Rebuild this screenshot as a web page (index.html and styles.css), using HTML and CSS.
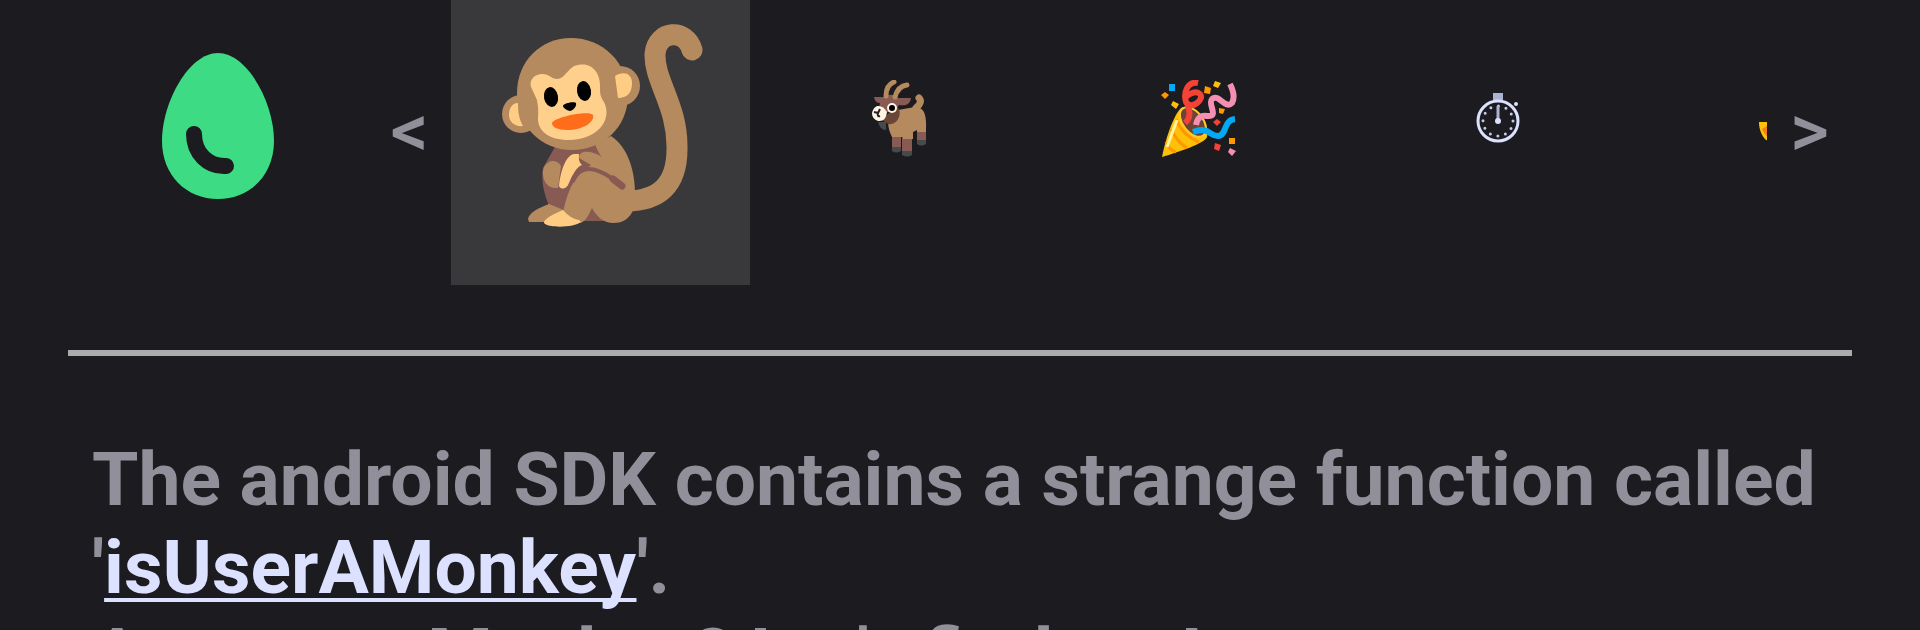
FILE: index.html
```html
<!DOCTYPE html>
<html lang="en">
<head>
    <meta charset="UTF-8">
    <meta name="viewport" content="width=device-width, initial-scale=1.0">
    <title>Easter Eggs</title>
    <link rel="stylesheet" href="styles.css">
</head>
<body>
    <header class="bar">
        <a class="home" href="#" aria-label="Home">
            <svg class="egg" viewBox="0 0 114 147">
                <path fill="#3ddc84" d="M57 0C86 0 113 49 113 88C113 122 89 146 57 146S1 122 1 88C1 49 28 0 57 0Z"/>
                <path fill="none" stroke="#1c1b1f" stroke-width="16" stroke-linecap="round" d="M33 81C33 100 47 114 65 113"/>
            </svg>
        </a>
        <button class="arrow" type="button" aria-label="Previous">&lt;</button>
        <nav class="eggs">
            <button class="item selected" type="button" aria-label="Monkey">
                <svg class="monkey" viewBox="-2 -1 204 206">
                    <path fill="none" stroke="#b58a5e" stroke-width="21" stroke-linecap="round" d="M191 27C185 5 156 7 154 31C153 58 177 83 176 126C176 162 158 178 125 178"/>
                    <path fill="#875b54" d="M55 122L102 121L125 195L108 198L80 198L48 183C43 170 40 160 42 145Z"/>
                    <path fill="#b58a5e" d="M94 121L110 113C127 124 134 148 134 170C136 187 128 200 113 200C101 200 95 192 91 185C87 193 84 200 78 200L62 190C64 178 70 158 80 150L90 142L78 135C78 126 92 128 101 134C97 129 96 126 94 121Z"/>
                    <path fill="none" stroke="#875b54" stroke-width="4" stroke-linecap="round" d="M72 158C80 140 97 143 121 163"/>
                    <path fill="none" stroke="#875b54" stroke-width="7" stroke-linecap="round" d="M112 156L121 163"/>
                    <path fill="#b58a5e" d="M51 138C45 139 41 145 42 152C43 160 48 166 57 165L60 143C58 139 54 138 51 138ZM48 181C40 184 28 189 27 196L28 199H50L65 188Z"/>
                    <path fill="#ffcc84" d="M73 131C66 132 60 145 58 163C60 167 65 166 67 162C71 153 75 144 81 142C77 138 78 135 78 131ZM62 187C57 189 43 195 43 200C46 205 73 205 80 199L78 197C72 196 66 192 62 187Z"/>
                    <circle cx="20" cy="91" r="19" fill="#b58a5e"/>
                    <circle cx="119" cy="63" r="20" fill="#b58a5e"/>
                    <path fill="#b58a5e" d="M70 15C101 15 127 39 127 72C127 105 101 127 71 127C40 127 16 103 16 70C16 38 40 15 70 15Z"/>
                    <path fill="#ffcc84" d="M17 80C10 80 8 87 8 92C8 99 14 104 22 103C18 96 17 89 17 80ZM114 53C122 48 131 50 131 60C131 70 126 75 117 75Z"/>
                    <path fill="#ffd08c" d="M30 64C27 53 41 47 50 54C63 62 66 43 77 42C91 39 99 50 99 62C99 71 99 73 103 79C112 97 96 117 68 117C48 117 36 108 37 94C38 86 36 78 36 77Z"/>
                    <ellipse cx="50" cy="74" rx="7" ry="10" transform="rotate(-10 50 74)"/>
                    <ellipse cx="83" cy="68" rx="7" ry="10" transform="rotate(-10 83 68)"/>
                    <path d="M62 83C62 80 74 78 75 80C76 84 71 88 69 88C67 88 62 85 62 83Z"/>
                    <path fill="#ff6d1a" d="M51 100C53 94 89 87 92 92C94 99 82 107 66 107C56 107 51 104 51 100Z"/>
                </svg>
            </button>
            <button class="item" type="button" aria-label="Goat">
                <svg class="small" viewBox="0 0 80 80">
                    <path fill="none" stroke="#b58a5e" stroke-width="7" stroke-linecap="round" d="M56 28Q63 22 59 18"/>
                    <path fill="#875b54" d="M32 54H41V68H32ZM42 56H52V73H42ZM57 46H66V62H57Z"/>
                    <path fill="#474a4d" d="M32 67H41V71Q36 74 32 71ZM42 71H52V75Q47 78 42 75ZM57 60H66V64Q61 67 57 64ZM18 42L26 42V50Q20 50 18 42Z"/>
                    <path fill="#b58a5e" d="M38 30L55 27C64 27 67 34 66 52H57V50L53 52V59H43V57L32 57C30 53 28 48 28 41Z"/>
                    <path fill="#6b4636" d="M36 26C44 31 38 46 28 44L22 40Z"/>
                    <path fill="#875b54" d="M14 17L24 17C28 14 35 14 38 18L51 18C50 25 45 26 39 25L35 32H18L20 23Q15 23 14 17Z"/>
                    <path fill="none" stroke="#b58a5e" stroke-width="5" stroke-linecap="round" d="M26 16Q26 5 34 2M35 17Q38 6 47 5"/>
                    <path fill="#fff3e4" d="M17 26Q23 25 27 32Q26 42 18 41Q12 39 12 33Q13 28 17 26Z"/>
                    <circle cx="32" cy="28" r="5" fill="#fff3e4"/>
                    <circle cx="32" cy="28" r="3"/>
                    <path fill="none" stroke="#222" stroke-width="2" d="M14 32L18 33L20 29M18 33Q17 37 20 36"/>
                </svg>
            </button>
            <button class="item" type="button" aria-label="Party">
                <svg class="small" viewBox="0 0 80 80">
                    <path fill="#ffc107" d="M22 28C32 22 52 43 48 57C46 63 20 72 3 77C6 61 14 36 22 28Z"/>
                    <path fill="none" stroke="#ff9800" stroke-width="3" d="M17 39Q23 55 40 62M12 49Q18 62 28 68M7 62Q10 70 17 72"/>
                    <path fill="none" stroke="#fff59d" stroke-width="3" d="M18 40L8 67"/>
                    <ellipse cx="34" cy="42" rx="10" ry="17" transform="rotate(-38 34 42)" fill="#6d4237" stroke="#ffca28" stroke-width="2"/>
                    <path fill="none" stroke="#f44336" stroke-width="6" d="M26 43Q33 37 29 26M39 3C29 1 24 12 27 22C32 31 46 19 41 14C37 10 29 14 26 18"/>
                    <path fill="none" stroke="#f48fb1" stroke-width="6" d="M37 45Q39 34 48 36C61 37 48 24 53 19C60 13 66 30 73 23Q77 16 71 4"/>
                    <path fill="none" stroke="#03a9f4" stroke-width="6" d="M34 52C50 46 50 56 59 56C68 56 64 40 76 39"/>
                    <path fill="#03a9f4" d="M10 4H16V11H10Z"/>
                    <path fill="#ff9800" d="M6 12L10 15L6 19L2 15ZM46 6L52 8L51 14L45 13ZM60 28L66 29L64 34L60 33ZM70 58H76V64H70Z"/>
                    <path fill="#ffc107" d="M14 21L20 24L17 29L12 25ZM56 1L62 3L59 8L54 6Z"/>
                    <path fill="#f44336" d="M58 39L62 42L58 46L54 42ZM56 63L62 65L60 71L55 69Z"/>
                    <path fill="#f48fb1" d="M71 68L77 71L73 76L69 72Z"/>
                </svg>
            </button>
            <button class="item" type="button" aria-label="Timer">
                <svg class="timer" viewBox="0 0 44 50">
                    <path fill="#aab4d0" d="M17 0H27V7H17Z"/>
                    <circle cx="22" cy="28" r="20" fill="none" stroke="#dbe1ff" stroke-width="3"/>
                    <circle cx="22" cy="28" r="15" fill="none" stroke="#c4cbe6" stroke-width="3" stroke-linecap="round" stroke-dasharray="0 7.854"/>
                    <path stroke="#aab4d0" stroke-width="3" d="M22 13V28"/>
                    <circle cx="22" cy="28" r="3" fill="#dbe1ff"/>
                    <circle cx="40" cy="11" r="2" fill="#dbe1ff"/>
                </svg>
            </button>
            <button class="item" type="button" aria-label="Confetti">
                <svg class="small" viewBox="0 0 80 80">
                    <path fill="#ffc107" d="M2 42H40L36 66L9 60C5 56 2 50 2 42Z"/>
                    <path fill="#f57c28" d="M5 49L11 45V57Q7 54 5 49Z"/>
                </svg>
            </button>
        </nav>
        <button class="arrow next" type="button" aria-label="Next">&gt;</button>
    </header>
    <hr>
    <main>
        <p>The android SDK contains a strange function called '<a href="#">isUserAMonkey</a>'.<br>Are you a Monkey? Let's find out!</p>
    </main>
</body>
</html>
```
FILE: styles.css
```css
body {
    margin: 0;
    background-color: #1c1b1f;
    color: #91909a;
    font-family: Roboto, sans-serif;
    overflow: hidden;
}
button {
    padding: 0;
    border: none;
    background: none;
    color: inherit;
    font-family: inherit;
    cursor: pointer;
}
svg {
    display: block;
}
.bar {
    display: flex;
    height: 285px;
    padding: 0 68px;
}
.home {
    flex: 0 0 300px;
    padding-top: 53px;
    box-sizing: border-box;
}
.egg {
    width: 114px;
    height: 147px;
    margin: 0 auto;
}
.arrow {
    flex: 0 0 83px;
    height: 260px;
    font-size: 75px;
    font-weight: 500;
}
.arrow.next {
    flex-basis: 85px;
}
.eggs {
    display: flex;
    flex: 1;
    min-width: 0;
    overflow: hidden;
}
.item {
    display: flex;
    justify-content: center;
    align-items: flex-start;
    flex: 0 0 299px;
    box-sizing: border-box;
    padding-top: 80px;
}
.item.selected {
    padding-top: 22px;
    background-color: #39393b;
}
.monkey {
    width: 204px;
    height: 206px;
}
.small {
    width: 80px;
    height: 80px;
}
.timer {
    width: 44px;
    height: 50px;
    margin-top: 13px;
}
hr {
    height: 6px;
    margin: 65px 68px 0;
    border: none;
    background-color: #acaaaa;
}
main {
    padding: 79px 92px 0;
}
p {
    margin: 0;
    font-size: 75px;
    font-weight: 700;
    line-height: 88px;
}
a {
    color: #dbe1ff;
}
p a {
    text-decoration-thickness: 4px;
    text-underline-offset: 5px;
    text-decoration-skip-ink: none;
}
```
